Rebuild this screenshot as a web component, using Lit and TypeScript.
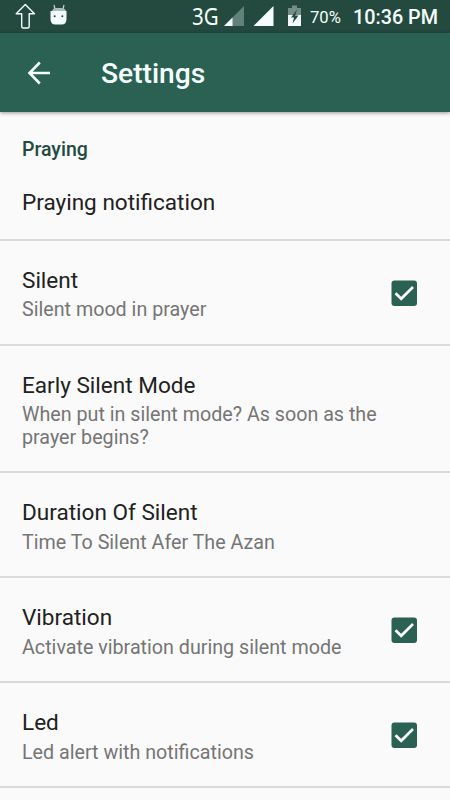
import { LitElement, html, css } from "lit";
import { customElement } from "lit/decorators.js";

interface Preference {
  title: string;
  summary?: string;
  checked?: boolean;
}

const preferences: Preference[] = [
  { title: "Silent", summary: "Silent mood in prayer", checked: true },
  { title: "Early Silent Mode", summary: "When put in silent mode? As soon as the prayer begins?" },
  { title: "Duration Of Silent", summary: "Time To Silent Afer The Azan" },
  { title: "Vibration", summary: "Activate vibration during silent mode", checked: true },
  { title: "Led", summary: "Led alert with notifications", checked: true },
];

@customElement("app-root")
export class AppRoot extends LitElement {
  static styles = css`
    :host { display: block; width: 450px; height: 800px; overflow: hidden; background: #fafafa; font-family: Roboto, sans-serif; color: #212121; }
    * { box-sizing: border-box; }
    .status { height: 33px; background: #24493f; color: #f4fffc; display: flex; align-items: center; }
    .status svg { display: block; flex: none; }
    .net { margin-left: 112px; width: 32px; font: 23.5px/33px "Noto Sans", sans-serif; transform: scaleX(.87); transform-origin: 0 50%; }
    .battery { width: 33px; margin-left: 6px; padding-top: 2px; font-size: 16.6px; white-space: nowrap; }
    .time { margin-left: 10px; padding-top: 2px; font-size: 19.8px; font-weight: 500; white-space: nowrap; }
    .bar { height: 79px; background: #2a6153; color: #f4fffc; display: flex; align-items: center; padding-left: 27px; box-shadow: 0 1px 4px rgba(0,0,0,.4); }
    .bar h1 { margin: 2px 0 0 50px; font-size: 28.2px; font-weight: 500; line-height: 36px; }
    .category { padding: 26px 22px 0; height: 54px; font-size: 19.5px; font-weight: 500; line-height: 23px; color: #24493f; }
    .row { display: flex; align-items: center; border-bottom: 2px solid #dadada; padding: 24.8px 32px 22.2px 22px; }
    .row.first { height: 75px; padding-top: 0; padding-bottom: 0; }
    .text { flex: 1; }
    .title { font-size: 22.55px; line-height: 30px; white-space: nowrap; }
    .summary { font-size: 19.7px; line-height: 22.5px; padding-top: 3.5px; color: #757575; }
    .check { display: block; flex: none; }
  `;

  render() {
    return html`
      <div class="status">
        <svg width="80" height="33" viewBox="0 0 80 33">
          <path d="M25.3 4.5L34.5 13.8H29.2V26.5Q29.2 28 27.7 28H23.2Q21.7 28 21.7 26.5V13.8H16.2Z" fill="none" stroke="#f4fffc" stroke-width="1.4" stroke-linejoin="round"/>
          <path d="M54 5l1 4M64 5l-1 4" stroke="#c9d8d2" stroke-width="1.2"/>
          <path d="M52 11q1-3 4-3h5q4 0 5 3z" fill="#a9bdb5"/>
          <path d="M50.5 11h16v8q0 5.5-5 5.5h-6q-5 0-5-5.5z" fill="#f4fffc"/>
          <circle cx="54.7" cy="16.3" r="1" fill="#24493f"/><circle cx="62.3" cy="16.3" r="1" fill="#24493f"/>
        </svg>
        <span class="net">3G</span>
        <svg width="80" height="33" viewBox="224 0 80 33">
          <path d="M244 6V26H224z" fill="#61817a"/>
          <path d="M232.5 17.5V26H224z" fill="#f4fffc"/>
          <path d="M273.5 6V26H253.5z" fill="#f4fffc"/>
          <path d="M288 15V8h4V5.5h5V8h4v7z" fill="#748e87"/>
          <path d="M288 15h13v11h-13z" fill="#f4fffc"/>
          <path d="M297 9.5l-6 8h3l-1.5 6 6-8h-3.3z" fill="#24493f"/>
        </svg>
        <span class="battery">70%</span>
        <span class="time">10:36 PM</span>
      </div>
      <div class="bar">
        <svg width="24" height="24" viewBox="0 0 24 24"><path d="M12.8 1.5L2.5 12l10.3 10.5M2.5 12H23" fill="none" stroke="#f4fffc" stroke-width="2.6"/></svg>
        <h1>Settings</h1>
      </div>
      <div class="category">Praying</div>
      <div class="row first"><div class="title">Praying notification</div></div>
      ${preferences.map((p) => html`
        <div class="row">
          <div class="text"><div class="title">${p.title}</div><div class="summary">${p.summary}</div></div>
          ${p.checked ? html`<svg class="check" width="28" height="28" viewBox="0 0 28 28"><rect x="1.5" y="0.5" width="25.5" height="25.5" rx="3" fill="#2a6153"/><path d="M5.5 13.2l5.7 5.6L23 7" fill="none" stroke="#fafafa" stroke-width="2.7"/></svg>` : ""}
        </div>`)}
    `;
  }
}
